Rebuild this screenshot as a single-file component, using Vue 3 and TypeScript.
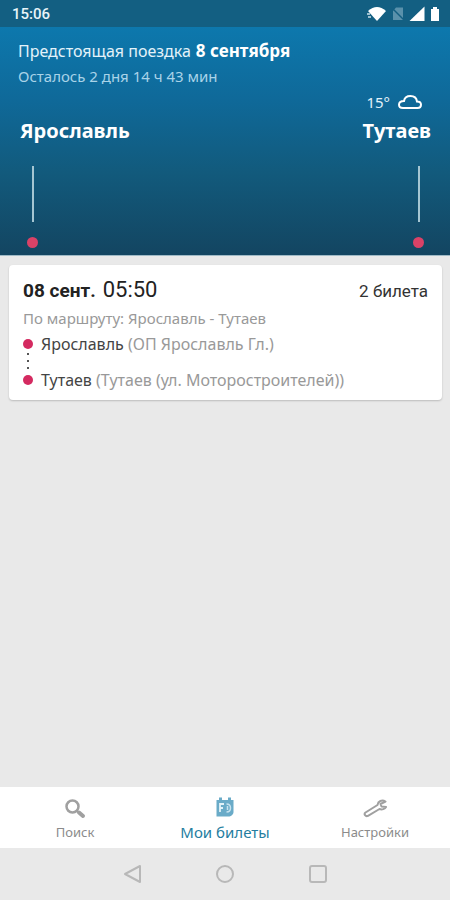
<script setup lang="ts">
import { ref } from 'vue'

type TabId = 'search' | 'tickets' | 'settings'

interface Tab {
  id: TabId
  label: string
}

interface Stop {
  city: string
  place: string
}

const tabs: Tab[] = [
  { id: 'search', label: 'Поиск' },
  { id: 'tickets', label: 'Мои билеты' },
  { id: 'settings', label: 'Настройки' },
]

const stops: Stop[] = [
  { city: 'Ярославль', place: '(ОП Ярославль Гл.)' },
  { city: 'Тутаев', place: '(Тутаев (ул. Моторостроителей))' },
]

const active = ref<TabId>('tickets')
</script>

<template>
  <div class="screen">
    <div class="status">
      <span>15:06</span>
      <div class="status-icons">
        <svg width="20" height="16" viewBox="0 0 20 16">
          <path d="M1 5Q10 -3 19 5L10 15Z" fill="#fff" />
          <path d="M0 8h3M1 11h3" stroke="#9cc0d0" stroke-width="2" />
        </svg>
        <svg width="12" height="16" viewBox="0 0 12 16">
          <path d="M4 1.500H11V14H1V5Z" fill="#5a91ab" />
          <path d="M0 2L12 14" stroke="#135f82" stroke-width="1.500" />
        </svg>
        <svg width="16" height="16" viewBox="0 0 16 16">
          <path d="M15.500 0.500V15H0.500Z" fill="#fff" />
        </svg>
        <svg width="10" height="16" viewBox="0 0 10 16">
          <path d="M3 1h4v2h2v12H1V3h2Z" fill="#fff" />
        </svg>
      </div>
    </div>

    <header class="trip">
      <h1 class="trip-title">Предстоящая поездка<b>8 сентября</b></h1>
      <p class="trip-left">Осталось 2 дня 14 ч 43 мин</p>
      <div class="ends">
        <div class="end">
          <strong class="city">Ярославль</strong>
          <div class="marker"><i class="bar"></i><i class="dot"></i></div>
        </div>
        <div class="end end-right">
          <div class="weather">
            <span>15°</span>
            <svg width="24" height="16" viewBox="0 0 24 16" fill="none" stroke="#fff" stroke-width="2">
              <path d="M5 14H19.500C22 14 23 12.500 23 10.800C23 9 21.500 7.500 19 7.500C18.500 4 16 2 12.500 2C9 2 6.500 4 6 7C3 7 1 8.500 1 10.800C1 13 3 14 5 14Z" />
            </svg>
          </div>
          <strong class="city">Тутаев</strong>
          <div class="marker"><i class="bar"></i><i class="dot"></i></div>
        </div>
      </div>
    </header>

    <main class="content">
      <article class="card">
        <div class="card-head">
          <h2 class="when"><b>08 сент.</b><time>05:50</time></h2>
          <span class="count">2 билета</span>
        </div>
        <p class="route">По маршруту: Ярославль - Тутаев</p>
        <ul class="stops">
          <li v-for="stop in stops" :key="stop.city" class="stop">
            <i class="stop-dot"></i>
            <span><span class="stop-city">{{ stop.city }}</span> {{ stop.place }}</span>
          </li>
        </ul>
      </article>
    </main>

    <nav class="tabs">
      <button
        v-for="tab in tabs"
        :key="tab.id"
        type="button"
        class="tab"
        :class="{ active: tab.id === active }"
        @click="active = tab.id"
      >
        <svg v-if="tab.id === 'search'" width="24" height="24" viewBox="0 0 24 24" fill="none" stroke="#a0a0a0">
          <circle cx="9.500" cy="9.500" r="6" stroke-width="2.500" />
          <path d="M14 14L16 16" stroke-width="2" />
          <path d="M16 15.500L20 19" stroke-width="4" stroke-linecap="round" />
        </svg>
        <svg v-else-if="tab.id === 'tickets'" width="24" height="24" viewBox="0 0 24 24" fill="none">
          <path d="M3.500 3H6V0.500H9V3H15V0.500H18V3H20.500V15C20.500 17.500 18 19.500 15.500 19.500H3.500Z" fill="#6aabc8" />
          <path d="M7 15V7H11M7 11H10" stroke="#e3f2f8" stroke-width="1.800" />
          <path d="M13.500 7C16.500 7 17.500 9 17.500 11C17.500 13.500 16 15 13.500 15M14.500 9V13" stroke="#c6e2ef" stroke-width="1.500" />
        </svg>
        <svg v-else width="24" height="24" viewBox="0 0 24 24" fill="none" stroke="#a0a0a0" stroke-width="2" stroke-linejoin="round">
          <path d="M22.500 4.500C19 2.500 15 4 14.500 8L2.500 15.500C0.500 17 2.500 20 5 18.800L16.500 12C19 13 22 12 23 10L18.500 9.500L17.500 7Z" />
        </svg>
        <span>{{ tab.label }}</span>
      </button>
    </nav>

    <div class="system">
      <button type="button" aria-label="Назад">
        <svg width="20" height="20" viewBox="0 0 20 20"><path d="M18 2V18L3 10Z" /></svg>
      </button>
      <button type="button" aria-label="Домой">
        <svg width="20" height="20" viewBox="0 0 20 20"><circle cx="10" cy="10" r="8" /></svg>
      </button>
      <button type="button" aria-label="Недавние">
        <svg width="20" height="20" viewBox="0 0 20 20"><rect x="2" y="2" width="16" height="16" rx="2" /></svg>
      </button>
    </div>
  </div>
</template>

<style>
body {
  margin: 0;
  background: #e9e9e9;
}
</style>

<style scoped>
.screen {
  display: flex;
  flex-direction: column;
  min-height: 100vh;
  background: #e9e9e9;
  font-family: "Noto Sans", sans-serif;
}

h1, h2, p, ul {
  margin: 0;
  padding: 0;
  font-weight: 400;
}

button {
  padding: 0;
  border: 0;
  background: none;
  font: inherit;
  color: inherit;
}

svg {
  display: block;
}

.status {
  display: flex;
  align-items: center;
  justify-content: space-between;
  height: 27px;
  padding: 1px 10px 0 12px;
  box-sizing: border-box;
  background: #135f82;
  color: #e8f4f9;
  font: 500 15px/26px Roboto, sans-serif;
}

.status-icons {
  display: flex;
  gap: 5px;
}

.trip {
  padding: 11px 19px 7px 18px;
  background: linear-gradient(#0d78ad, #0f6999 32%, #125a7c 64%, #134561);
  border-bottom: 1px solid #9fbac6;
  color: #fff;
}

.trip-title {
  font-size: 16px;
  line-height: 26px;
  color: #e3f2fa;
}

.trip-title b {
  margin-left: 5px;
  font-size: 17px;
  color: #fff;
}

.trip-left {
  font-size: 15px;
  line-height: 24px;
  color: #a9d3e8;
}

.ends {
  display: flex;
  align-items: flex-end;
  justify-content: space-between;
  padding-left: 2px;
}

.end {
  display: flex;
  flex-direction: column;
}

.end-right {
  align-items: flex-end;
}

.weather {
  display: flex;
  align-items: center;
  gap: 8px;
  height: 28px;
  padding-right: 9px;
  font-size: 15px;
  color: #e3f2fa;
}

.city {
  font-size: 20px;
  line-height: 30px;
}

.marker {
  display: flex;
  flex-direction: column;
  align-items: center;
  gap: 15px;
  width: 11px;
  margin: 20px 7px 0;
}

.bar {
  width: 2px;
  height: 56px;
  background: #a5c6d2;
}

.dot {
  width: 11px;
  height: 11px;
  border-radius: 50%;
  background: #da4267;
}

.content {
  flex: 1;
  padding: 9px 8px 9px 9px;
}

.card {
  padding: 11px 14px 9px;
  border-radius: 4px;
  background: #fff;
  box-shadow: 0 1px 2px rgba(0, 0, 0, 0.2);
  color: #999;
}

.card-head {
  display: flex;
  align-items: center;
  justify-content: space-between;
  line-height: 28px;
  font-family: Roboto, sans-serif;
  color: #222;
}

.when {
  display: flex;
  align-items: baseline;
  gap: 7px;
  font-size: 22px;
}

.when b {
  font-size: 19px;
}

.count {
  font-size: 17px;
  color: #333;
}

.route {
  padding-bottom: 2px;
  font-size: 15px;
  line-height: 26px;
}

.stops {
  display: flex;
  flex-direction: column;
  gap: 14px;
  list-style: none;
  font-size: 16px;
  line-height: 22px;
}

.stop {
  position: relative;
  display: flex;
  align-items: center;
  gap: 8px;
}

.stop-dot {
  width: 10px;
  height: 10px;
  border-radius: 50%;
  background: #d42a60;
}

.stop:not(:last-child)::after {
  content: "";
  position: absolute;
  top: 20px;
  left: 4px;
  width: 2px;
  height: 17px;
  background: repeating-linear-gradient(#555 0 2px, transparent 2px 7px);
}

.stop-city {
  color: #444;
}

.tabs {
  display: grid;
  grid-template-columns: repeat(3, 1fr);
  height: 61px;
  background: #fff;
}

.tab {
  display: flex;
  flex-direction: column;
  align-items: center;
  justify-content: center;
  gap: 2px;
  padding-top: 2px;
  color: #8b8b8b;
  font-size: 13px;
  line-height: 18px;
}

.tab.active {
  color: #247da0;
  font-size: 15px;
}

.system {
  display: flex;
  align-items: center;
  justify-content: center;
  gap: 73px;
  height: 52px;
}

.system svg {
  fill: none;
  stroke: #b8b8b8;
  stroke-width: 2;
  stroke-linejoin: round;
}
</style>
